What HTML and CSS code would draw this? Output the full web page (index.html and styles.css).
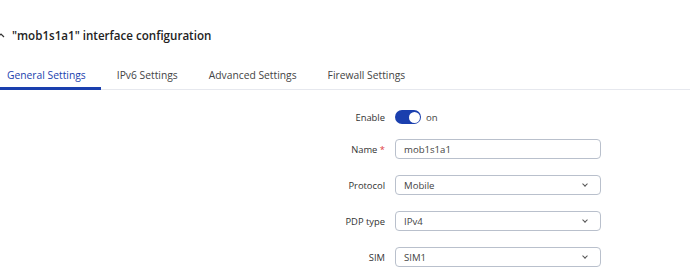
FILE: index.html
```html
<!DOCTYPE html>
<html lang="en">
<head>
  <meta charset="UTF-8" />
  <meta name="viewport" content="width=device-width, initial-scale=1.0"/>
  <title>Interface configuration</title>
  <link rel="stylesheet" href="styles.css">
</head>
<body>
  <div class="header">
    <svg class="collapse" width="8" height="6" viewBox="0 0 8 6"><path d="M1 5 L4 2 L7 5" fill="none" stroke="#333" stroke-width="1.2"/></svg>
    <h1>"mob1s1a1" interface configuration</h1>
  </div>

  <div class="tabs">
    <a class="tab active">General Settings</a>
    <a class="tab">IPv6 Settings</a>
    <a class="tab">Advanced Settings</a>
    <a class="tab">Firewall Settings</a>
  </div>

  <div class="form">
    <div class="row row-switch">
      <label class="label">Enable</label>
      <div class="control switch-wrap">
        <span class="switch"><span class="knob"></span></span>
        <span class="switch-text">on</span>
      </div>
    </div>
    <div class="row">
      <label class="label">Name <span class="req">*</span></label>
      <div class="control"><div class="input">mob1s1a1</div></div>
    </div>
    <div class="row">
      <label class="label">Protocol</label>
      <div class="control"><div class="input select">Mobile<span class="arrow"></span></div></div>
    </div>
    <div class="row">
      <label class="label">PDP type</label>
      <div class="control"><div class="input select">IPv4<span class="arrow"></span></div></div>
    </div>
    <div class="row">
      <label class="label">SIM</label>
      <div class="control"><div class="input select">SIM1<span class="arrow"></span></div></div>
    </div>
  </div>
</body>
</html>
```

FILE: styles.css
```css
body {
  font-family: 'Open Sans', sans-serif;
  background-color: #fff;
  color: #333;
  margin: 0;
  padding: 0;
}
.header {
  display: flex;
  align-items: center;
  height: 30px;
  margin-top: 20px;
  margin-left: -3px;
}
.collapse {
  margin-right: 7px;
}
.header h1 {
  font-size: 11.6px;
  font-weight: 600;
  margin: 0;
  color: #222;
}
.tabs {
  display: flex;
  margin-top: 13px;
  border-bottom: 1px solid #e6e8ee;
}
.tab {
  font-size: 10.3px;
  color: #444;
  padding: 5px 15.5px 5px;
  border-bottom: 3px solid transparent;
  margin-bottom: -1px;
}
.tab:first-child {
  padding-left: 7px;
}
.tab.active {
  color: #1a3fae;
  border-bottom-color: #1a3fae;
}
.form {
  margin-top: 13px;
}
.row {
  display: flex;
  align-items: center;
  height: 36px;
}
.row-switch {
  height: 28px;
}
.label {
  width: 395px;
  text-align: right;
  font-size: 9.4px;
  color: #333;
  padding-right: 10px;
  box-sizing: border-box;
}
.req {
  color: #e04040;
}
.control {
  width: 206px;
}
.switch-wrap {
  display: flex;
  align-items: center;
}
.switch {
  width: 26px;
  height: 14px;
  border-radius: 7px;
  background-color: #1a3fae;
  display: flex;
  align-items: center;
  justify-content: flex-end;
  padding: 0 1.5px;
  box-sizing: border-box;
}
.knob {
  width: 11px;
  height: 11px;
  border-radius: 50%;
  background-color: #fff;
}
.switch-text {
  font-size: 9.6px;
  margin-left: 5px;
  color: #444;
}
.input {
  height: 20px;
  border: 1px solid #b9c0cc;
  border-radius: 4px;
  box-sizing: border-box;
  font-size: 9.6px;
  color: #444;
  display: flex;
  align-items: center;
  padding-left: 8px;
  padding-right: 13px;
}
.select {
  justify-content: space-between;
}
.arrow {
  width: 3px;
  height: 3px;
  border-right: 1px solid #555;
  border-bottom: 1px solid #555;
  transform: rotate(45deg);
  margin-top: -2px;
}
```
